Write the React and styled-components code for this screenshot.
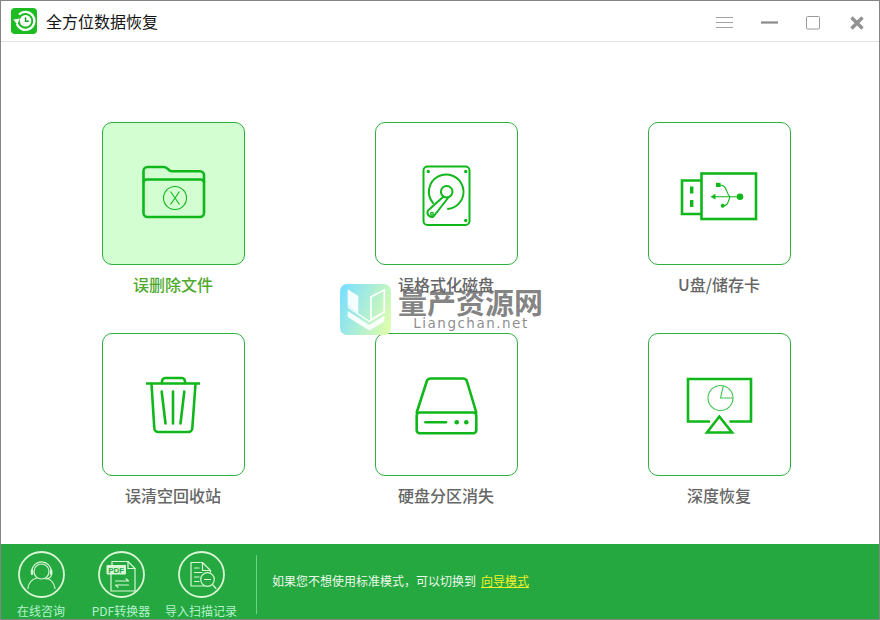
import React from "react";
import styled, { createGlobalStyle } from "styled-components";

const G = "#10b71a";
const P = "#d9f7d6";

const Global = createGlobalStyle`
  html, body { margin: 0; padding: 0; background: #fff; }
  * { box-sizing: border-box; }
`;

const Win = styled.div`
  position: relative;
  width: 880px;
  height: 620px;
  border: 1px solid #858585;
  background: #fff;
  display: flex;
  flex-direction: column;
  overflow: hidden;
  font-family: "Noto Sans CJK SC", "Liberation Sans", sans-serif;
`;
const TitleBar = styled.header`
  height: 41px;
  flex: none;
  border-bottom: 1px solid #e3e3e3;
  display: flex;
  align-items: center;
  padding: 0 0 0 10px;
`;
const Title = styled.h1`
  margin: 0 0 0 9px;
  font-size: 16px;
  font-weight: 400;
  color: #141414;
  line-height: 22px;
`;
const Controls = styled.div`
  margin-left: auto;
  height: 40px;
  svg { display: block; }
`;
const Main = styled.main`
  flex: 1;
  display: grid;
  grid-template-columns: repeat(3, 143px);
  grid-auto-rows: 211px;
  column-gap: 130px;
  padding: 80px 0 0 101px;
`;
const Item = styled.div`
  display: flex;
  flex-direction: column;
  align-items: center;
`;
const Card = styled.div`
  width: 143px;
  height: 143px;
  flex: none;
  border-radius: 10px;
  border: 1px solid #2eb03e;
  background: ${(p) => (p.$active ? "#d3fed2" : "#fff")};
  svg { display: block; margin: -1px; }
`;
const Label = styled.div`
  margin: 7px 1px 0 0;
  font-size: 16px;
  line-height: 24px;
  font-weight: 500;
  white-space: nowrap;
  color: ${(p) => (p.$active ? "#4fa92f" : "#666")};
`;
const Footer = styled.footer`
  height: 75px;
  flex: none;
  background: #25a83f;
  display: flex;
  overflow: hidden;
`;
const Tool = styled.div`
  width: 80px;
  flex: none;
  display: flex;
  flex-direction: column;
  align-items: center;
  padding-top: 7px;
  svg { display: block; flex: none; }
`;
const ToolLabel = styled.span`
  margin-top: 4px;
  font-size: 12px;
  line-height: 18px;
  color: #b5f2cf;
  white-space: nowrap;
`;
const Divider = styled.div`
  width: 1px;
  height: 59px;
  margin: 11px 0 0 15px;
  background: #6fd184;
`;
const Hint = styled.p`
  margin: 28px 0 0 15px;
  font-size: 12px;
  line-height: 18px;
  color: #eef9ee;
  white-space: nowrap;
`;
const GuideLink = styled.a`
  margin-left: 5px;
  color: #f4f02e;
  text-decoration: underline;
`;
const Mark = styled.div`
  position: absolute;
  left: 339px;
  top: 283px;
  display: flex;
  pointer-events: none;
`;
const MarkText = styled.div`
  margin-left: 8px;
  display: flex;
  flex-direction: column;
  align-items: center;
`;
const MarkTitle = styled.div`
  font-size: 29px;
  line-height: 30px;
  font-weight: 700;
  color: rgba(110, 110, 110, 0.85);
  margin: 2px 0 -1px -1px;
  white-space: nowrap;
`;
const MarkSub = styled.div`
  font-family: "DejaVu Sans", "Liberation Sans", sans-serif;
  font-size: 13.500px;
  line-height: 16px;
  letter-spacing: 1.500px;
  color: rgba(120, 120, 120, 0.85);
  white-space: nowrap;
`;

const S = { fill: "none", stroke: G, strokeWidth: 2.6, strokeLinecap: "round", strokeLinejoin: "round" };
const Icon = ({ children }) => (
  <svg width="143" height="143" viewBox="0 0 143 143">{children}</svg>
);

const Folder = () => (
  <Icon>
    <g {...S}>
      <path d="M41.500 58V49a4 4 0 0 1 4-4H62c2 0 3 1 4 2.200s2 2.100 4 2.100H98a4 4 0 0 1 4 4V91a4 4 0 0 1-4 4H45.500a4 4 0 0 1-4-4Z" />
      <path d="M41.500 60a3.500 3.500 0 0 1 3.500-2.500H98.500a3.500 3.500 0 0 1 3.500 2.500" />
    </g>
    <circle cx="73" cy="76" r="11.500" fill="none" stroke={G} strokeWidth="1.100" />
    <path d="M68.500 69.500 77.500 82.500M77.500 69.500 68.500 82.500" fill="none" stroke={G} strokeWidth="1.100" />
  </Icon>
);
const Drive = () => (
  <Icon>
    <g {...S} strokeWidth="2">
      <rect x="48.500" y="44.500" width="46" height="58.500" rx="4" />
      <path d="M58 81A17.300 17.300 0 1 1 73 87" />
      <circle cx="71.700" cy="69.700" r="5.800" />
      <path d="M68 75 53 88.500a4.300 4.300 0 0 0 5.500 6L73 76" />
      <circle cx="57" cy="91.800" r="1.400" strokeWidth="1.400" />
    </g>
    <g fill={G}>
      <circle cx="53.300" cy="49.500" r="1.700" />
      <circle cx="90.700" cy="49.500" r="1.700" />
      <circle cx="90.700" cy="98.500" r="1.700" />
    </g>
  </Icon>
);
const Usb = () => (
  <Icon>
    <g fill="none" stroke={G} strokeWidth="2.600">
      <rect x="53.500" y="51.500" width="54.500" height="45.500" />
      <path d="M53.500 58.500H34V92H53.500" />
    </g>
    <g fill={G}>
      <rect x="42" y="64.500" width="3.400" height="7" />
      <rect x="42" y="78" width="3.400" height="7" />
      <circle cx="92" cy="74.700" r="3.300" />
      <path d="M62.500 74.700 67.500 71.800V77.600Z" />
      <rect x="68" y="60.800" width="4.500" height="4.200" />
      <circle cx="74.700" cy="83.800" r="2" />
    </g>
    <path d="M66 74.700H92M82 74.700C78 72 79.500 63 72 63M82 74.700C80 80 80 83.800 75 83.800" fill="none" stroke={G} strokeWidth="1.100" />
  </Icon>
);
const Trash = () => (
  <Icon>
    <g {...S}>
      <path d="M44 50.500H98" strokeLinecap="butt" />
      <path d="M60 50V48.500a3.500 3.500 0 0 1 3.500-3.500H79.500a3.500 3.500 0 0 1 3.500 3.500V50" />
      <path d="M49.500 51 52.300 95a4 4 0 0 0 4 4H86.300a4 4 0 0 0 4-4L93.500 51" />
      <path d="M59.700 58.500 63.500 90.500M71 58.500V90.500M82.300 58.500 78.500 90.500" />
    </g>
  </Icon>
);
const Disk = () => (
  <Icon>
    <g {...S}>
      <path d="M41.700 79.500 51.700 48.500a4 4 0 0 1 3.500-3H88.500a4 4 0 0 1 3.500 3L101.300 79.500" />
      <rect x="41.700" y="79.500" width="59.600" height="20.800" rx="3" />
      <path d="M50.500 89.300H71" strokeWidth="2.600" />
    </g>
    <g fill={G}>
      <circle cx="81.700" cy="89.300" r="2.300" />
      <circle cx="91.300" cy="89.300" r="2.300" />
    </g>
  </Icon>
);
const Deep = () => (
  <Icon>
    <path d="M62 88.500H40V46H103V88.500H81.500" fill="none" stroke={G} strokeWidth="2.600" />
    <path d="M71.300 83.500 84 99.500H59Z" fill="none" stroke={G} strokeWidth="2.600" />
    <circle cx="72.500" cy="65" r="12.500" fill="none" stroke="#3cc449" strokeWidth="1.100" />
    <path d="M75.300 52.800 72.500 65H85" fill="none" stroke="#3cc449" strokeWidth="1.100" />
  </Icon>
);

const items = [
  ["误删除文件", Folder, true],
  ["误格式化磁盘", Drive],
  ["U盘/储存卡", Usb],
  ["误清空回收站", Trash],
  ["硬盘分区消失", Disk],
  ["深度恢复", Deep],
];

const Ring = ({ children }) => (
  <svg width="47" height="47" viewBox="0 0 47 47">
    <circle cx="23.500" cy="23.500" r="22.500" fill="none" stroke={P} strokeWidth="1.800" />
    {children}
  </svg>
);
const L = { fill: "none", stroke: P, strokeWidth: 1.200, strokeLinecap: "round", strokeLinejoin: "round" };

const Agent = () => (
  <Ring>
    <g {...L}>
      <circle cx="23.500" cy="20.500" r="7.500" />
      <path d="M13.800 20.500a9.700 9.700 0 0 1 19.400 0" />
      <path d="M9.800 37.500c1-6.500 5-9.500 9-10.500M37 37.500c-1-6.500-5-9.500-9-10.500" />
      <path d="M33.500 23c0 3-2 4.500-5.500 5" />
    </g>
    <rect x="12.800" y="18.500" width="2.400" height="5.500" rx="1.200" fill={P} />
    <rect x="32" y="18.500" width="2.400" height="5.500" rx="1.200" fill={P} />
  </Ring>
);
const PdfTag = () => (
  <>
    <rect x="8.500" y="14" width="19.500" height="9.500" rx="1" fill={P} />
    <text x="18.200" y="21.900" fontSize="8" fontWeight="700" textAnchor="middle" fontFamily="Liberation Sans, sans-serif" fill="#25a83f">PDF</text>
  </>
);
const Pdf = () => (
  <Ring>
    <g {...L}>
      <path d="M14 14V10.500H30L37 17.500V40H13V23.500" />
      <path d="M30 10.500V17.500H37" />
      <path d="M17.500 30H30.500L28 27.800M30.500 34H17.500L20 36.200" />
    </g>
    <PdfTag />
  </Ring>
);
const Scan = () => (
  <Ring>
    <g {...L}>
      <path d="M26 35H13V11.500H24.500L32.500 19.500V21" />
      <path d="M24.500 11.500V19.500H32.500" />
      <path d="M16.500 17H21M16.500 21.500H24M16.500 26H21M16.500 30.500H21" />
      <circle cx="29.500" cy="28.500" r="6.800" />
      <path d="M26.500 28.500H32.500M34.500 33.500 38 37.500" />
    </g>
  </Ring>
);

const WinButtons = () => (
  <svg width="164" height="40" viewBox="715 1 164 40">
    <path d="M716 17.500H733M716 22.500H733M716 27.500H733" stroke="#a2a2a2" strokeWidth="1" fill="none" />
    <path d="M761 22.500H778" stroke="#8a8a8a" strokeWidth="2.200" fill="none" />
    <rect x="806.500" y="16.500" width="13" height="12.500" rx="1" fill="none" stroke="#9a9a9a" strokeWidth="1" />
    <path d="M851.500 17.500 862.500 28.500M862.500 17.500 851.500 28.500" stroke="#929292" strokeWidth="3.400" fill="none" />
  </svg>
);

export default function App() {
  return (
    <Win>
      <Global />
      <TitleBar>
        <svg width="26" height="26" viewBox="0 0 26 26" style={{ flex: "none" }}>
          <rect width="26" height="26" rx="4" fill="#1cbc22" />
          <path d="M8 6.500A9 9 0 1 1 5.800 15.500" fill="none" stroke="#fff" strokeWidth="2.300" />
          <path d="M2.300 11.500 8.800 10.500 6.300 16.500Z" fill="#fff" />
          <circle cx="14.500" cy="12.800" r="5.800" fill="#fff" />
          <path d="M14.500 9.300V13.300H17.800" fill="none" stroke="#1a9c22" strokeWidth="1.400" />
        </svg>
        <Title>全方位数据恢复</Title>
        <Controls><WinButtons /></Controls>
      </TitleBar>
      <Main>
        {items.map(([text, Ic, active]) => (
          <Item key={text}>
            <Card $active={active}><Ic /></Card>
            <Label $active={active}>{text}</Label>
          </Item>
        ))}
      </Main>
      <Footer>
        <Tool><Agent /><ToolLabel>在线咨询</ToolLabel></Tool>
        <Tool><Pdf /><ToolLabel>PDF转换器</ToolLabel></Tool>
        <Tool><Scan /><ToolLabel>导入扫描记录</ToolLabel></Tool>
        <Divider />
        <Hint>如果您不想使用标准模式，可以切换到<GuideLink>向导模式</GuideLink></Hint>
      </Footer>
      <Mark>
        <svg width="51" height="51" viewBox="0 0 51 51">
          <defs>
            <linearGradient id="wm" x1="0" y1="0.3" x2="1" y2="0.7">
              <stop offset="0" stopColor="#7fe0fb" />
              <stop offset="1" stopColor="#dcfcb0" />
            </linearGradient>
          </defs>
          <rect width="51" height="51" rx="7" fill="url(#wm)" />
          <path d="M7.700 5.300 18.300 12V29.300L7.700 21.500Z" fill="#fff" fillOpacity="0.9" />
          <path d="M31 12.700 44.300 6V28L31 35.500Z" fill="none" stroke="#fff" strokeWidth="1.600" />
          <path d="M7.700 23 29.300 37.500 44.300 28" fill="none" stroke="#fff" strokeWidth="1.300" />
          <path d="M7.700 27 29.300 41 44.300 31.500V37.700L29.300 46.500 7.700 33Z" fill="#fff" fillOpacity="0.9" />
        </svg>
        <MarkText>
          <MarkTitle>量产资源网</MarkTitle>
          <MarkSub>Liangchan.net</MarkSub>
        </MarkText>
      </Mark>
    </Win>
  );
}
